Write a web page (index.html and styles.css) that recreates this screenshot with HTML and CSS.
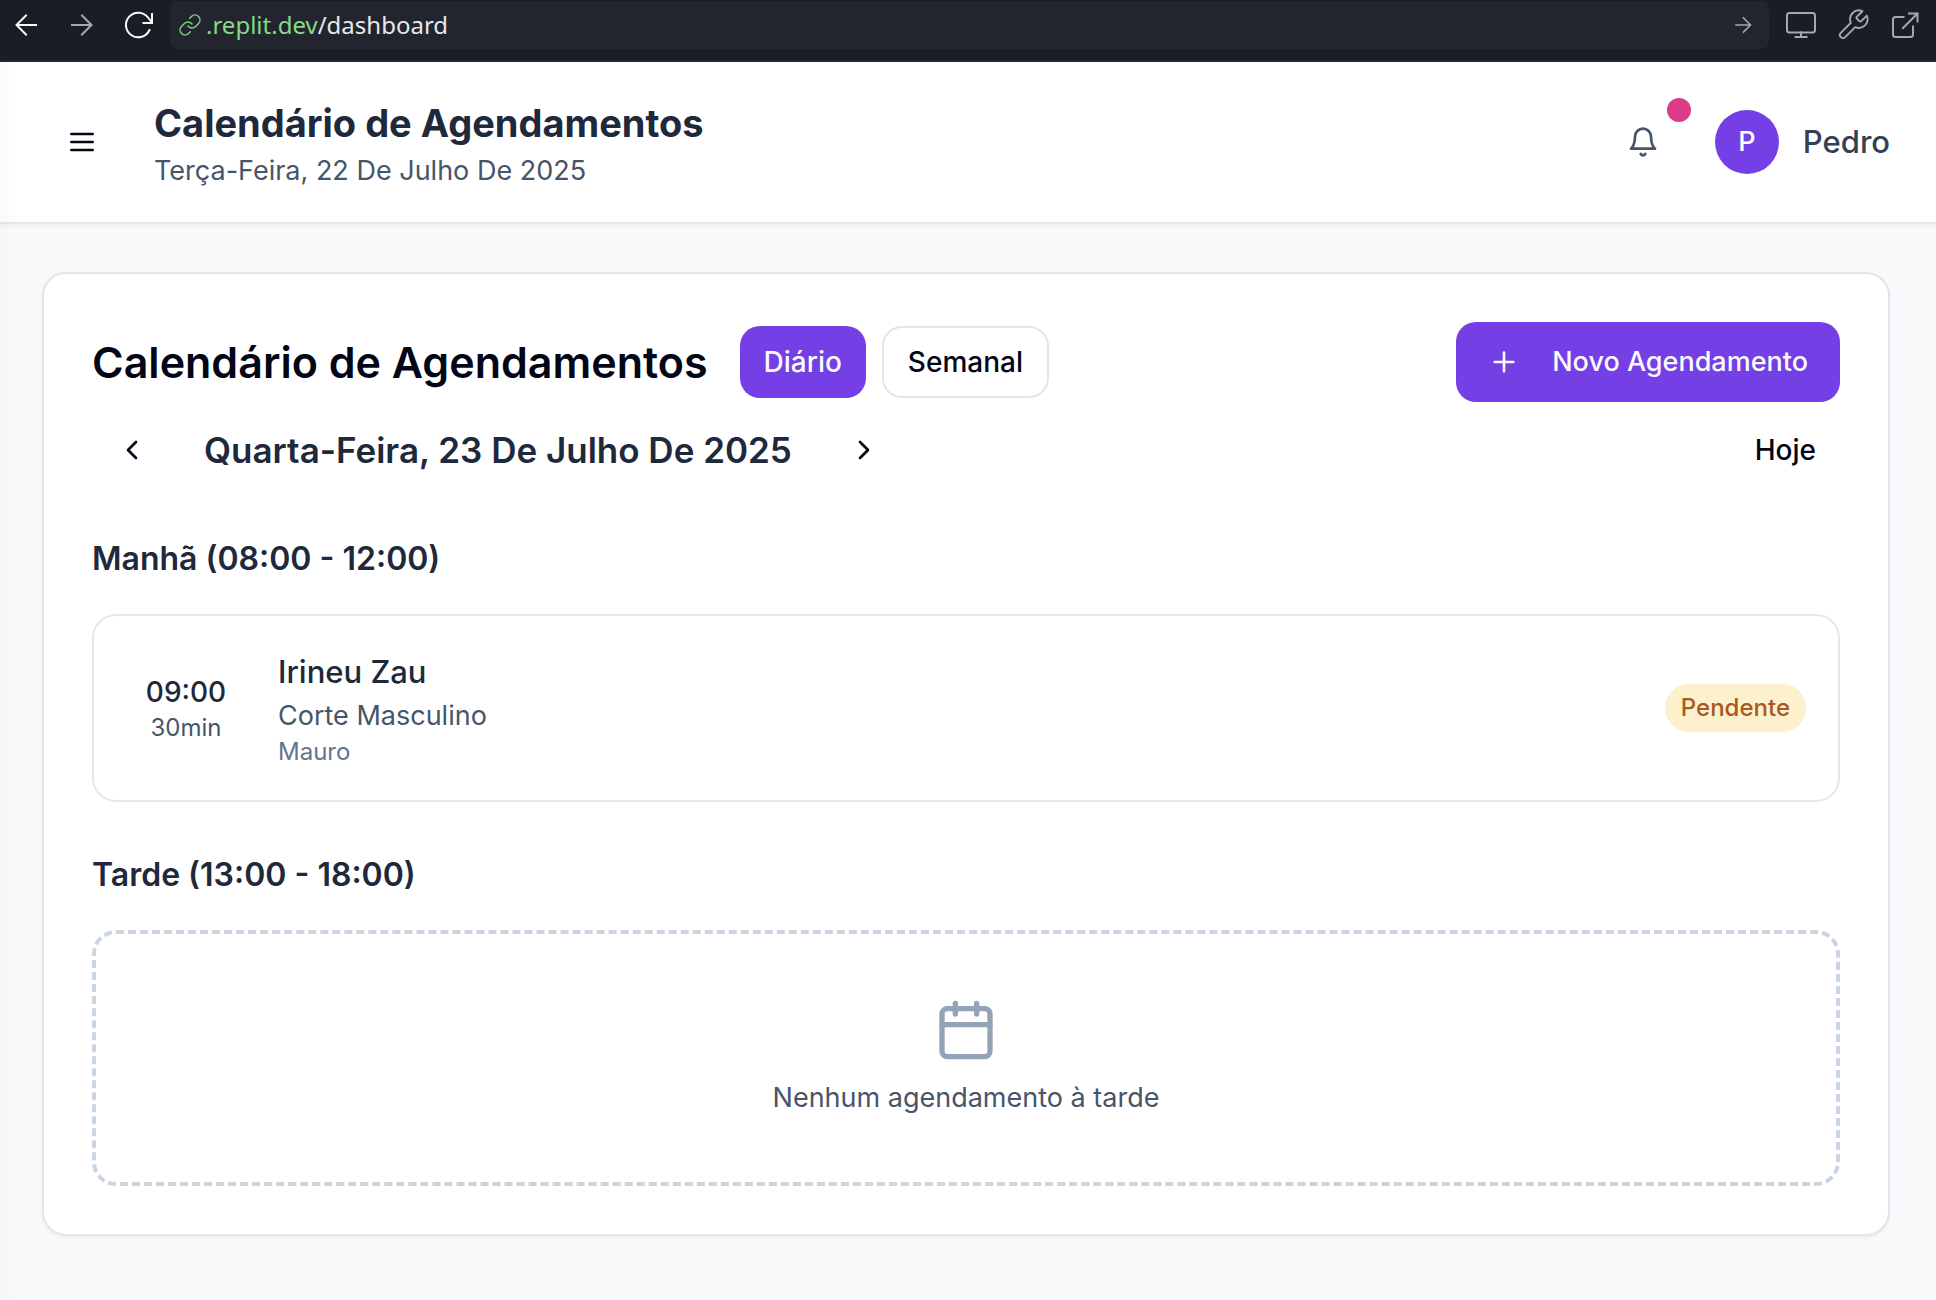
FILE: index.html
```html
<!DOCTYPE html>
<html lang="pt-BR">
<head>
<meta charset="utf-8">
<meta name="viewport" content="width=device-width, initial-scale=1">
<title>Calendário de Agendamentos</title>
<link rel="stylesheet" href="styles.css">
</head>
<body>
<nav class="browser" aria-label="Navegador">
  <div class="browser-nav">
    <button class="tool tool-bright" type="button" aria-label="Voltar"><svg class="tool-icon" viewBox="0 0 32 32"><path d="M26 16H7M16 6.500 6.500 16l9.500 9.500"/></svg></button>
    <button class="tool" type="button" aria-label="Avançar"><svg class="tool-icon" viewBox="0 0 32 32"><path d="M6 16h19M16 6.500l9.500 9.500-9.500 9.500"/></svg></button>
    <button class="tool tool-bright" type="button" aria-label="Recarregar"><svg class="tool-icon" viewBox="0 0 32 32"><path d="M27.500 21A12.300 12.300 0 1 1 26 8.500L29.500 13M30 5v9h-8.500"/></svg></button>
  </div>
  <form class="address">
    <svg class="link-icon" viewBox="0 0 24 24"><path d="M10 13a5 5 0 0 0 7.540.54l3-3a5 5 0 0 0-7.070-7.070l-1.720 1.710"/><path d="M14 11a5 5 0 0 0-7.540-.54l-3 3a5 5 0 0 0 7.070 7.070l1.710-1.710"/></svg>
    <label class="address-host" for="path">.replit.dev</label>
    <input class="address-path" id="path" type="text" value="/dashboard">
    <button class="tool" type="button" aria-label="Ir"><svg class="tool-icon" viewBox="0 0 32 32"><path class="fine" d="M9 16h14M16.500 9l7 7-7 7"/></svg></button>
  </form>
  <div class="browser-tools">
    <button class="tool" type="button" aria-label="Dispositivos"><svg class="tool-icon" viewBox="0 0 32 32"><rect x="2" y="4" width="28" height="19.500" rx="2.500"/><path d="M16 23.500V28M10.500 28h11"/></svg></button>
    <button class="tool" type="button" aria-label="Ferramentas"><svg class="tool-icon" viewBox="1 1 22 22"><path class="thin" d="M14.700 6.300a1 1 0 0 0 0 1.400l1.600 1.600a1 1 0 0 0 1.400 0l3.770-3.770a6 6 0 0 1-7.940 7.940l-6.910 6.910a2.120 2.120 0 0 1-3-3l6.910-6.910a6 6 0 0 1 7.940-7.940l-3.760 3.760z"/></svg></button>
    <button class="tool" type="button" aria-label="Abrir em nova aba"><svg class="tool-icon" viewBox="0 0 32 32"><path d="M14.500 8H6.500A2.500 2.500 0 0 0 4 10.500v15A2.500 2.500 0 0 0 6.500 28h15a2.500 2.500 0 0 0 2.500-2.500V17.500M20 4.500H28.500v8M28.500 4.500 14 19"/></svg></button>
  </div>
</nav>

<div class="app">
  <header class="header">
    <button class="icon-button" type="button" aria-label="Menu"><svg class="icon" viewBox="0 0 24 24"><path d="M4 6h16M4 12h16M4 18h16"/></svg></button>
    <div class="header-text">
      <h1 class="header-title">Calendário de Agendamentos</h1>
      <p class="header-date">Terça-Feira, 22 De Julho De 2025</p>
    </div>
    <button class="icon-button bell" type="button" aria-label="Notificações"><svg class="icon" viewBox="0 0 24 24"><path d="M6 8a6 6 0 0 1 12 0c0 7 3 9 3 9H3s3-2 3-9"/><path d="M10.300 21a1.940 1.940 0 0 0 3.400 0"/></svg><span class="bell-dot"></span></button>
    <div class="user">
      <span class="avatar">P</span>
      <span class="user-name">Pedro</span>
    </div>
  </header>

  <main class="main">
    <section class="card">
      <div class="card-head">
        <h2 class="card-title">Calendário de Agendamentos</h2>
        <div class="views">
          <button class="view view-active" type="button">Diário</button>
          <button class="view" type="button">Semanal</button>
        </div>
        <button class="new-button" type="button"><svg class="icon" viewBox="0 0 24 24"><path d="M5 12h14M12 5v14"/></svg>Novo Agendamento</button>
      </div>

      <div class="day-nav">
        <button class="icon-button" type="button" aria-label="Dia anterior"><svg class="icon" viewBox="0 0 24 24"><path d="m15 18-6-6 6-6"/></svg></button>
        <h3 class="day">Quarta-Feira, 23 De Julho De 2025</h3>
        <button class="icon-button" type="button" aria-label="Próximo dia"><svg class="icon" viewBox="0 0 24 24"><path d="m9 18 6-6-6-6"/></svg></button>
        <button class="today" type="button">Hoje</button>
      </div>

      <section class="period">
        <h4 class="period-title">Manhã (08:00 - 12:00)</h4>
        <article class="booking">
          <div class="booking-time">
            <p class="time">09:00</p>
            <p class="duration">30min</p>
          </div>
          <div class="booking-info">
            <p class="client">Irineu Zau</p>
            <p class="service">Corte Masculino</p>
            <p class="staff">Mauro</p>
          </div>
          <span class="status">Pendente</span>
        </article>
      </section>

      <section class="period">
        <h4 class="period-title">Tarde (13:00 - 18:00)</h4>
        <div class="empty">
          <svg class="empty-icon" viewBox="0 0 24 24"><path d="M8 2v4M16 2v4M3 10h18"/><rect x="3" y="4" width="18" height="18" rx="2"/></svg>
          <p class="empty-text">Nenhum agendamento à tarde</p>
        </div>
      </section>
    </section>
  </main>
</div>
</body>
</html>
```
FILE: styles.css
```css
* { box-sizing: border-box; margin: 0; padding: 0; }

body {
  display: flex;
  flex-direction: column;
  min-height: 100vh;
  background: #f9fafc;
  color: #020617;
  font-family: Inter, "Liberation Sans", sans-serif;
  font-size: 27px;
  line-height: 40px;
}

button, input { font: inherit; color: inherit; border: 0; background: none; }
button { cursor: pointer; }

svg {
  display: block;
  flex: none;
  fill: none;
  stroke: currentColor;
  stroke-width: 2;
  stroke-linecap: round;
  stroke-linejoin: round;
}

/* Browser bar */
.browser {
  display: flex;
  align-items: flex-start;
  gap: 12px;
  padding: 1px 11px 11px 6px;
  border-bottom: 2px solid #262531;
  background: #1b1d25;
  color: #a5a8ae;
}
.browser-nav, .browser-tools { display: flex; align-items: center; height: 48px; }
.browser-nav { gap: 16px; }
.browser-tools { gap: 12px; }
.tool { display: flex; align-items: center; justify-content: center; width: 40px; height: 40px; }
.tool-bright { color: #f5f9fc; }
.tool-icon { width: 32px; height: 32px; stroke-linecap: square; stroke-linejoin: miter; }
.tool-icon .thin { stroke-width: 1.3; stroke-linejoin: round; }
.tool-icon .fine { stroke-width: 1.6; }
.address {
  display: flex;
  flex: 1;
  align-items: center;
  min-width: 0;
  height: 48px;
  padding: 0 6px 0 8px;
  border-radius: 8px;
  background: #22252e;
  font-family: "Noto Sans", sans-serif;
  font-size: 24px;
  line-height: 32px;
}
.link-icon { width: 24px; height: 24px; margin-right: 4px; color: #77d67b; stroke-width: 1.5; }
.address-host { color: #86d986; }
.address-path { flex: 1; min-width: 0; color: #e6e8eb; outline: 0; }

/* App */
.app { position: relative; flex: 1; }
.app::before {
  content: "";
  position: absolute;
  inset: 0 auto 0 0;
  width: 18px;
  background: linear-gradient(90deg, rgba(0, 0, 0, .02), transparent);
}
.icon { width: 32px; height: 32px; }
.icon-button { display: flex; align-items: center; justify-content: center; width: 80px; height: 72px; }

.header {
  display: flex;
  align-items: center;
  height: 162px;
  padding: 0 46px 0 42px;
  border-bottom: 2px solid #e2e8f0;
  background: #fff;
  box-shadow: 0 2px 4px rgba(0, 0, 0, .05);
}
.header-text { flex: 1; margin-left: 32px; padding-top: 2px; }
.header-title { color: #1e293b; font-size: 38px; font-weight: 700; line-height: 56px; }
.header-date { color: #475569; }
.bell { position: relative; color: #475569; }
.bell-dot {
  position: absolute;
  top: -8px;
  right: -8px;
  width: 24px;
  height: 24px;
  border-radius: 50%;
  background: #db3b88;
}
.user { display: flex; align-items: center; gap: 24px; margin-left: 32px; }
.avatar {
  width: 64px;
  height: 64px;
  border-radius: 50%;
  background: #743fe4;
  color: #fff;
  font-weight: 500;
  line-height: 64px;
  text-align: center;
}
.user-name { color: #334155; font-size: 31px; font-weight: 500; line-height: 48px; }

/* Calendar card */
.main { padding: 48px 46px 48px 42px; }
.card {
  padding: 48px;
  border: 2px solid #e4e5eb;
  border-radius: 24px;
  background: #fff;
  box-shadow: 0 2px 4px rgba(0, 0, 0, .05);
}
.card-head { display: flex; align-items: center; gap: 32px; }
.card-title { font-size: 43px; font-weight: 600; line-height: 48px; }
.views { display: flex; flex: 1; gap: 16px; }
.view {
  height: 72px;
  padding: 0 24px;
  border: 2px solid #e4e5eb;
  border-radius: 20px;
  font-size: 28px;
  font-weight: 500;
}
.view-active { border: 0; background: #743fe4; color: #f8fafc; }
.new-button {
  display: flex;
  align-items: center;
  gap: 32px;
  height: 80px;
  padding: 0 32px;
  border-radius: 20px;
  background: #743fe4;
  color: #f8fafc;
  font-weight: 500;
}
.day-nav { display: flex; align-items: center; margin-top: 12px; }
.day { margin: 0 32px; color: #1e293b; font-size: 35px; font-weight: 600; line-height: 56px; }
.today { height: 72px; margin-left: auto; padding: 0 24px; font-size: 28px; font-weight: 500; }

.period { margin-top: 48px; }
.period-title { margin-bottom: 30px; color: #1e293b; font-size: 32px; font-weight: 600; line-height: 50px; }
.booking {
  display: flex;
  align-items: center;
  gap: 32px;
  padding: 32px;
  border: 2px solid #e2e8f0;
  border-radius: 24px;
}
.booking-time { width: 120px; text-align: center; }
.booking-info { flex: 1; }
.time { color: #1e293b; font-size: 28px; font-weight: 500; }
.duration { color: #475569; font-size: 24px; line-height: 32px; }
.client { color: #1e293b; font-size: 31px; font-weight: 500; line-height: 48px; }
.service { color: #475569; }
.staff { color: #64748b; font-size: 24px; line-height: 32px; }
.status {
  padding: 8px 16px;
  border-radius: 24px;
  background: #fcf1cc;
  color: #a95920;
  font-size: 24px;
  font-weight: 500;
  line-height: 32px;
}
.empty {
  display: flex;
  flex-direction: column;
  align-items: center;
  gap: 16px;
  padding: 64px;
  border: 4px dashed #cbd5e1;
  border-radius: 24px;
}
.empty-icon { width: 64px; height: 64px; color: #94a3b8; }
.empty-text { color: #475569; }
```
